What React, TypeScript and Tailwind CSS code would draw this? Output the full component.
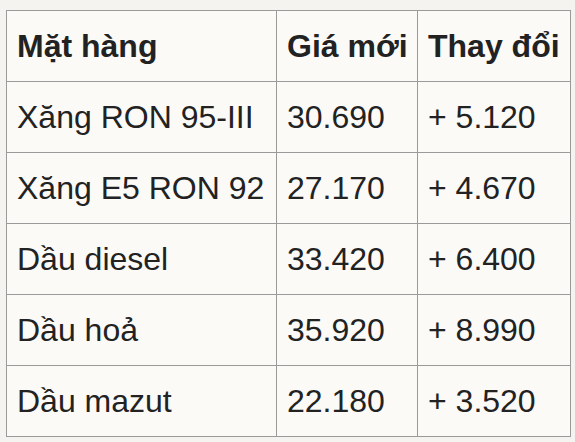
const rows = [
  ["Xăng RON 95-III", "30.690", "+ 5.120"],
  ["Xăng E5 RON 92", "27.170", "+ 4.670"],
  ["Dầu diesel", "33.420", "+ 6.400"],
  ["Dầu hoả", "35.920", "+ 8.990"],
  ["Dầu mazut", "22.180", "+ 3.520"],
];

export default function App() {
  return (
    <div className="w-[575px] h-[442px] bg-[#f4f3f0] pt-[10px] pl-[6px] font-['Liberation_Sans',Arial,sans-serif] text-[#222]">
      <table className="table-fixed w-[564px] border-collapse bg-[#fbfaf7] text-[32px] leading-none whitespace-nowrap">
        <thead>
          <tr className="h-[71px]">
            <th className="w-[270px] border border-[#9a9a9a] px-[10px] text-left font-bold">Mặt hàng</th>
            <th className="w-[141px] border border-[#9a9a9a] px-[10px] text-left font-bold">Giá mới</th>
            <th className="w-[153px] border border-[#9a9a9a] px-[10px] text-left font-bold">Thay đổi</th>
          </tr>
        </thead>
        <tbody>
          {rows.map((r) => (
            <tr key={r[0]} className="h-[71px]">
              {r.map((c, i) => (
                <td key={i} className="border border-[#9a9a9a] px-[10px]">{c}</td>
              ))}
            </tr>
          ))}
        </tbody>
      </table>
    </div>
  );
}
